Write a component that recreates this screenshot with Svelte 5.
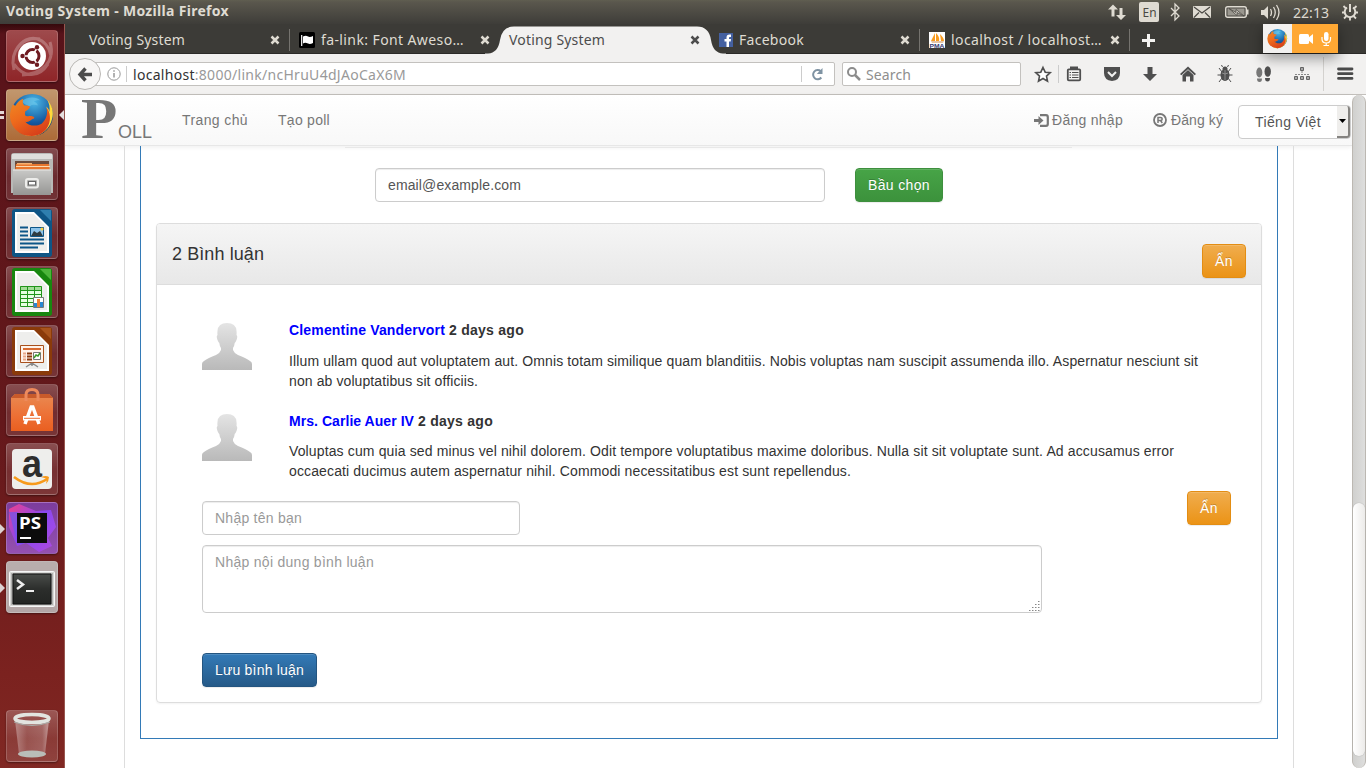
<script>
  // Spreads the letters of a single line so that it takes the given width.
  function fit(node, width) {
    const range = document.createRange();
    range.selectNodeContents(node);
    const natural = range.getBoundingClientRect().width;
    const count = node.textContent.trim().length;
    node.style.letterSpacing = (width - natural) / count + 'px';
  }

  const tabs = [
    { title: 'Voting System', width: 96, icon: '' },
    { title: 'fa-link: Font Aweso…', width: 143, icon: 'flag' },
    { title: 'Voting System', width: 96, icon: '', active: true },
    { title: 'Facebook', width: 65, icon: 'fb' },
    { title: 'localhost / localhost…', width: 151, icon: 'pma' }
  ];

  const comments = [
    {
      name: 'Clementine Vandervort', nameWidth: 156, when: '2 days ago', whenWidth: 75,
      lines: [
        ['Illum ullam quod aut voluptatem aut. Omnis totam similique quam blanditiis. Nobis voluptas nam suscipit assumenda illo. Aspernatur nesciunt sit', 909],
        ['non ab voluptatibus sit officiis.', 189]
      ]
    },
    {
      name: 'Mrs. Carlie Auer IV', nameWidth: 125, when: '2 days ago', whenWidth: 75,
      lines: [
        ['Voluptas cum quia sed minus vel nihil dolorem. Odit tempore voluptatibus maxime doloribus. Nulla sit sit voluptate sunt. Ad accusamus error', 885],
        ['occaecati ducimus autem aspernatur nihil. Commodi necessitatibus est sunt repellendus.', 562]
      ]
    }
  ];
</script>

{#snippet firefox()}
  <circle cx="24" cy="24" r="22" fill="url(#globe)" />
  <path d="M13 10c5-5 15-6 20-1-3-1-5 0-7 1 2 1 4 2 4 4-3-1-6-1-8 1-4-1-6-2-9-5z" fill="#6fc6ea" opacity=".6" />
  <path d="M40 8c5 6 7 13 5 20-2 10-11 18-21 18-5 0-9-1-12-4 14 4 26-4 28-17 0-4 0-7-1-10 2 2 3 4 3 6 1-5 0-9-2-13z" fill="#ffd83a" />
  <path d="M4 13c1 1 2 1 3 1 1-2 4-6 8-7-1 3-1 5 1 7 2 0 4 0 6 1-1 3-3 4-5 5 0 2-1 4 1 5 3 1 5-1 8 1 1 1 0 2-1 2-2 1-4 4-8 3 4 5 12 5 17 2 5-4 7-11 5-17 4 5 5 13 2 19-3 7-10 11-17 11C11 46 2 37 1 26c0-5 1-9 3-13z" fill="url(#fox)" />
{/snippet}

{#snippet office(edge, fold)}
  <path d="M6 5q0-3 3-3h20l17 16v29q0 3-3 3H9q-3 0-3-3z" fill={edge} />
  <path d="M28 2h15q3 0 3 3v14z" fill={edge} />
  <path d="M34 3h11v11z" fill={fold} />
  <path d="M9 5h19l15 15v26H9z" fill="#fff" />
  <path d="M11 7h16.500l13.500 13.500V44H11z" fill="#eeeeec" />
{/snippet}

{#snippet closeMark()}
  <svg class="x" width="10" height="10" viewBox="0 0 10 10"><path d="M1.500 1.500l7 7M8.500 1.500l-7 7" fill="none" stroke="currentColor" stroke-width="2.500" /></svg>
{/snippet}

<div class="desktop">
  <svg class="defs" width="0" height="0">
    <defs>
      <radialGradient id="globe" cx=".55" cy=".2" r=".8"><stop offset="0" stop-color="#4cb9e8" /><stop offset=".6" stop-color="#14589f" /><stop offset="1" stop-color="#0b2f66" /></radialGradient>
      <linearGradient id="fox" x1="0" y1="0" x2=".6" y2="1"><stop offset="0" stop-color="#f08a24" /><stop offset=".5" stop-color="#ee6a1c" /><stop offset="1" stop-color="#d8401a" /></linearGradient>
      <linearGradient id="person" x1="0" y1="0" x2="0" y2="1"><stop offset="0" stop-color="#e4e4e4" /><stop offset="1" stop-color="#b9b9b9" /></linearGradient>
      <linearGradient id="steel" x1="0" y1="0" x2="0" y2="1"><stop offset="0" stop-color="#c9c9c7" /><stop offset="1" stop-color="#969694" /></linearGradient>
      <linearGradient id="bag" x1="0" y1="0" x2="0" y2="1"><stop offset="0" stop-color="#e98a52" /><stop offset=".6" stop-color="#ed6f34" /><stop offset="1" stop-color="#e95f20" /></linearGradient>
      <linearGradient id="storm" x1="0" y1="0" x2="1" y2="1"><stop offset="0" stop-color="#f0408a" /><stop offset=".45" stop-color="#8a48f0" /><stop offset="1" stop-color="#b04ae0" /></linearGradient>
      <linearGradient id="glass" x1="0" y1="0" x2="1" y2="0"><stop offset="0" stop-color="#fff" stop-opacity=".35" /><stop offset=".35" stop-color="#fff" stop-opacity=".12" /><stop offset=".8" stop-color="#fff" stop-opacity=".18" /><stop offset="1" stop-color="#fff" stop-opacity=".45" /></linearGradient>
      <linearGradient id="screen" x1="0" y1="0" x2="0" y2="1"><stop offset="0" stop-color="#4a4d4a" /><stop offset=".5" stop-color="#2c2e2c" /><stop offset="1" stop-color="#232523" /></linearGradient>
    </defs>
  </svg>

  <header class="panel-bar">
    <b use:fit={223}>Voting System - Mozilla Firefox</b>
    <svg width="265" height="24" viewBox="1101 0 265 24" fill="#dfdbd2">
      <path d="M1113 4.500l5 5h-3.500v7h-3v-7h-3.500z M1121 20l-5-5h3.500V8h3v7h3.500z" />
      <rect x="1139" y="2" width="20" height="20" rx="2" />
      <path d="M1171 8l8 8-4 4V4l4 4-8 8" fill="none" stroke="#dfdbd2" stroke-width="1.300" />
      <rect x="1193" y="6" width="18" height="12" rx="1" />
      <path d="M1194 7l8 6 8-6M1194 17.500l5-5M1210 17.500l-5-5" fill="none" stroke="#4a4843" stroke-width="1.200" />
      <rect x="1225.700" y="6.700" width="20.600" height="10.600" rx="2" fill="#4a4843" stroke="#dfdbd2" stroke-width="1.400" />
      <path d="M1227.500 8.500h17v7h-17z" fill="#9a978f" /><path d="M1247 9.500h1.500v5h-1.500z" />
      <path d="M1229 8.500l7 4v-3l8 6.500-7-3.500v3z" stroke="#4a4843" stroke-width=".8" />
      <path d="M1261 10h3l4-4v13l-4-4h-3z" />
      <path d="M1270.500 9q2 3.500 0 7M1273.500 7q3.500 5.500 0 11M1276.500 5q5 7.500 0 15" fill="none" stroke="#dfdbd2" stroke-width="1.300" />
      <path d="M1350 4v8" stroke="#dfdbd2" stroke-width="2" />
      <path d="M1347 7.500a5.300 5.300 0 1 0 6 0" fill="none" stroke="#dfdbd2" stroke-width="2" />
      <path d="M1346 8.500l-2.500-2.500M1354 8.500l2.500-2.500M1344.500 12.500h-2.500M1355.500 12.500h2.500M1346.500 16l-2.500 2.500M1353.500 16l2.500 2.500M1350 17.500v3" stroke="#dfdbd2" stroke-width="1.800" />
      <text x="1142.500" y="17" fill="#4a4843" font-size="13" textLength="14" lengthAdjust="spacingAndGlyphs">En</text>
      <text x="1293" y="17.500" font-size="15" textLength="36" lengthAdjust="spacingAndGlyphs">22:13</text>
    </svg>
  </header>

  <div class="below">
    <aside class="launcher">
      <div class="tile dash">
        <svg width="52" height="52" viewBox="0 0 52 52">
          <path d="M8 40C3 20 18 6 34 9M44 12c6 20-8 32-28 33M10 20C22 0 42 8 45 26M42 34C32 50 16 46 8 34" fill="none" stroke="#fff" stroke-opacity=".25" stroke-width="3" />
          <circle cx="26" cy="26" r="14" fill="#fff" />
          <circle cx="26.500" cy="26" r="6.500" fill="none" stroke="#6e1a20" stroke-width="3" />
          <path d="M26 26L17 26M26 26L31.500 17.500M26 26L31.500 34.500" stroke="#fff" stroke-width="1.500" />
          <circle cx="26.500" cy="26" r="4.500" fill="#fff" />
          <circle cx="16.500" cy="26" r="2.200" fill="#6e1a20" /><circle cx="31" cy="17.300" r="2.200" fill="#6e1a20" /><circle cx="31" cy="34.700" r="2.200" fill="#6e1a20" />
        </svg>
      </div>
      <div class="tile fox">
        <svg width="46" height="46" viewBox="0 0 48 48">{@render firefox()}</svg>
        <i class="pip double"></i><i class="focus"></i>
      </div>
      <div class="tile">
        <svg width="52" height="52" viewBox="0 0 52 52">
          <path d="M5 8q0-3 3-3h36q3 0 3 3v37H5z" fill="#b9b9b7" /><path d="M6 6h40v5H6z" fill="#dededc" />
          <path d="M9 13h34v9H9z" fill="#6b4a3a" /><path d="M10 16h33l1 8H9z" fill="#e8762c" /><path d="M10 18h34v1H10z" fill="#fbd9b0" /><path d="M11 15h15v1.500H11z" fill="#f5b070" />
          <path d="M7 21.500h38v25.500H7z" fill="url(#steel)" /><path d="M7 21.500h38v1H7z" fill="#e8e8e6" />
          <rect x="20" y="31" width="12" height="8.500" rx="2" fill="none" stroke="#ededeb" stroke-width="2" /><rect x="22.500" y="33.500" width="7" height="3.500" fill="#fff" stroke="#666" stroke-width="1" />
        </svg>
      </div>
      <div class="tile">
        <svg width="52" height="52" viewBox="0 0 52 52">
          {@render office('#0e5585', '#2f7fae')}
          <path d="M14 20.500h8M14 24.500h8M14 28.500h8M14 32.500h24M14 36.500h24M14 40.500h18" stroke="#0d5688" stroke-width="2" />
          <path d="M24.500 20.500h13v9h-13z" fill="#8dc4ea" stroke="#0d5688" /><path d="M25 29l3-5 3 2 3-2 3 5z" fill="#2d3c42" /><circle cx="36" cy="22" r="1.500" fill="#ffd040" />
        </svg>
      </div>
      <div class="tile">
        <svg width="52" height="52" viewBox="0 0 52 52">
          {@render office('#18870f', '#4cb53a')}
          <path d="M14 20h22v20H14z" fill="#e6ffe0" /><path d="M14 20h22v4H14z" fill="#a4dc98" />
          <path d="M14.500 20.500h21v20h-21zM14.500 24.500h21M14.500 28.500h21M14.500 32.500h21M14.500 36.500h21M21.500 20v20M28.500 20v20" fill="none" stroke="#22951a" />
          <path d="M27.500 31.500h10v10h-10z" fill="#fff" stroke="#777" /><path d="M28 37h3v4h-3z" fill="#2a87d0" /><path d="M31 33h3v8h-3z" fill="#f08030" /><path d="M34 36h3v5h-3z" fill="#2a87d0" />
        </svg>
      </div>
      <div class="tile">
        <svg width="52" height="52" viewBox="0 0 52 52">
          {@render office('#8a3a0a', '#a8541c')}
          <path d="M14.500 20.500h23v17h-23z" fill="#fff3ea" stroke="#a8501c" /><path d="M17 24h18" stroke="#d86a30" stroke-width="2" />
          <path d="M17 28.500h3M17 31.500h3M17 34.500h3" stroke="#e8a888" stroke-width="2" /><path d="M21 28.500h5M21 31.500h5M21 34.500h5" stroke="#8a3a10" stroke-width="2" />
          <path d="M27.500 27.500h7v7h-7z" fill="#fff" stroke="#777" /><path d="M28 33l2-3 2 1 2-3" fill="none" stroke="#3a9a2a" stroke-width="1.500" />
          <path d="M26 38l-6 4M26 38l6 4M26 38v3" stroke="#888" stroke-width="1.500" />
        </svg>
      </div>
      <div class="tile">
        <svg width="52" height="52" viewBox="0 0 52 52">
          <path d="M5 14l4-4h34l4 4v33H5z" fill="url(#bag)" /><path d="M5 14l4-4h34l4 4z" fill="#c95a2a" />
          <path d="M20 17V11q0-5.500 6-5.500t6 5.500v6" fill="none" stroke="#ee8a5c" stroke-width="3" />
          <path d="M19 40L25.200 23h1.600L33 40" fill="none" stroke="#fff" stroke-width="3.500" />
          <path d="M17 32h18v4.500H17z" fill="#fff" /><path d="M18 33.800h16v1H18z" fill="#ed6f34" />
        </svg>
      </div>
      <div class="tile">
        <svg width="52" height="52" viewBox="0 0 52 52">
          <rect x="6" y="6" width="40" height="40" rx="4" fill="#eeeeec" />
          <text class="sans" x="16" y="34" font-size="39" font-weight="bold" fill="#2d2d2d" textLength="20" lengthAdjust="spacingAndGlyphs">a</text>
          <path d="M8 34q17 13 33 2" fill="none" stroke="#f79a1c" stroke-width="2.600" /><path d="M35 34q5-2 8 0 0 4-3 7 1-4 0-5.500z" fill="#f79a1c" />
        </svg>
      </div>
      <div class="tile storm">
        <svg width="52" height="52" viewBox="0 0 52 52">
          <path d="M3 7l10-5 17 7 15-1 5 17-8 11 4 8-13 6-13-9-9 3L3 25z" fill="url(#storm)" />
          <path d="M3 10l6 22 3 9 5 1L12 10z" fill="#6b55f0" opacity=".7" />
          <path d="M11 11h30v30H11z" fill="#0c0c0c" /><path d="M14 35h11v2H14z" fill="#fff" />
          <text x="13" y="27" font-size="16.500" font-weight="bold" fill="#fff" textLength="22" lengthAdjust="spacingAndGlyphs">PS</text>
        </svg>
        <i class="pip"></i>
      </div>
      <div class="tile term">
        <svg width="52" height="52" viewBox="0 0 52 52">
          <rect x="3.500" y="10.500" width="45" height="35" rx="1" fill="#d8d8d6" stroke="#f6f6f6" /><rect x="5" y="12" width="42" height="32" fill="#b0b0ae" />
          <path d="M7 13h38v30H7z" fill="url(#screen)" stroke="#111" stroke-width="1" />
          <path d="M11 19l6 4.500-6 4.500" fill="none" stroke="#eee" stroke-width="2.500" /><path d="M20 30h8" stroke="#eee" stroke-width="2" />
        </svg>
        <i class="pip"></i>
      </div>
      <div class="tile trash">
        <svg width="52" height="52" viewBox="0 0 52 52">
          <path d="M9 10l4 34q13 6 26 0l4-34z" fill="url(#glass)" />
          <ellipse cx="26" cy="44" rx="14" ry="3.500" fill="#b9bdb8" />
          <ellipse cx="26" cy="8.500" rx="17" ry="4" fill="none" stroke="#e2e4e0" stroke-width="3.500" />
          <path d="M8 12q18 7 36 0" fill="none" stroke="#a9aca8" stroke-width="1" />
        </svg>
      </div>
    </aside>

    <main class="browser">
      <div class="tabs">
        {#each tabs as tab, i}
          <div class="tab" class:active={tab.active} class:line={i === 0 || i > 2}>
            {#if tab.active}
              <svg class="shape" width="241" height="30" viewBox="0 0 241 30"><path d="M0 30V29.500H3Q13 29 15 16 17 2.500 29 2.500H212Q224 2.500 226 16 228 29 238 29.500H241V30z" fill="#f2f1f0" /></svg>
            {/if}
            {#if tab.icon === 'flag'}
              <svg width="16" height="16" viewBox="0 0 16 16"><rect width="16" height="16" rx="1.500" fill="#000" /><path d="M2.700 3v11" stroke="#fff" stroke-width="1.200" /><path d="M4 4.500q3-1.500 5 0 2 1 5-.5v7q-3 1.500-5 .5-3-1.500-5 0z" fill="#fff" /></svg>
            {:else if tab.icon === 'fb'}
              <svg width="14" height="14" viewBox="0 0 14 14"><rect width="14" height="14" fill="#4460a0" /><path d="M7.500 14V8.500H5.500V6h2V4.500q0-3 3-3H12V4h-1.200q-.8 0-.8.8V6h2l-.3 2.500H10V14z" fill="#fff" /></svg>
            {:else if tab.icon === 'pma'}
              <svg class="pma" width="16" height="16" viewBox="0 0 16 16"><rect width="16" height="16" fill="#fff" /><path d="M6 1v8H2zM7 1q4 4 3 8H7zM11 2q4 4 4 7h-3z" fill="#f89c20" /><path d="M2 9.500h13l-1 1H3z" fill="#c88a50" /><text class="sans" x=".5" y="15.500" font-size="6" font-weight="bold" fill="#343a70" textLength="15" lengthAdjust="spacingAndGlyphs">PMA</text></svg>
            {/if}
            <span use:fit={tab.width}>{tab.title}</span>
            {@render closeMark()}
          </div>
        {/each}
        <svg class="plus" width="13" height="13" viewBox="0 0 13 13"><path d="M6.500 0v13M0 6.500h13" stroke="#f4f3f1" stroke-width="3" /></svg>
      </div>

      <div class="toolbar">
        <div class="back"><svg width="14" height="15" viewBox="0 0 14 15"><path d="M7.500 1.500L2 7.500l5.500 6M2.500 7.500H14" fill="none" stroke="#4c4c4c" stroke-width="3.400" /></svg></div>
        <div class="url">
          <svg width="14" height="14" viewBox="0 0 14 14"><circle cx="7" cy="7" r="6.200" fill="none" stroke="#999" /><path d="M7 6v4.500M7 3.300v1.500" stroke="#888" stroke-width="1.300" /></svg>
          <div class="address"><span use:fit={273}><em>localhost</em>:8000/link/ncHruU4dJAoCaX6M</span></div>
          <svg class="reload" width="13" height="13" viewBox="0 0 13 13"><path d="M9.800 3.200A4.600 4.600 0 1 0 10.300 9.500" fill="none" stroke="#7f93a3" stroke-width="2" /><path d="M11.500 0v6H5.800z" fill="#7f93a3" /></svg>
        </div>
        <div class="search">
          <svg width="14" height="14" viewBox="0 0 14 14"><circle cx="5" cy="5" r="4" fill="none" stroke="#8c8c8c" stroke-width="2" /><path d="M8 8l5 5" stroke="#8c8c8c" stroke-width="2.500" /></svg>
          <span use:fit={45}>Search</span>
        </div>
        <svg class="tools" width="331" height="40" viewBox="1021 54 331 40" fill="#4f4f4f">
          <path d="M1043 67.500l2.200 4.700 5 .5-3.700 3.400 1 5-4.500-2.600-4.500 2.600 1-5-3.700-3.400 5-.5z" fill="#fff" stroke="#4f4f4f" stroke-width="1.600" />
          <path d="M1058.500 65v18" stroke="#ccc" />
          <rect x="1067.800" y="69.300" width="12.400" height="11" rx="1" fill="#f2f1f0" stroke="#4f4f4f" stroke-width="1.800" /><path d="M1070 66.500h8v3h-8z" /><path d="M1072 72.500h6.500M1072 75h6.500M1072 77.500h6.500M1069.500 72.500h1.500M1069.500 75h1.500M1069.500 77.500h1.500" stroke="#4f4f4f" stroke-width="1.100" />
          <path d="M1104 67h16v6q0 7-8 8-8-1-8-8z" /><path d="M1108 72l4 4 4-4" fill="none" stroke="#f2f1f0" stroke-width="2" />
          <path d="M1147.500 67h5v7h4.500l-7 7-7-7h4.500z" />
          <path d="M1188 66.500l8 7.500-1.300 1.300-6.700-6-6.700 6L1180 74z M1182.500 75l5.500-5 5.500 5v6.500h-3.500v-5h-4v5h-3.500z" />
          <ellipse cx="1225" cy="75" rx="4.500" ry="6" /><circle cx="1225" cy="69" r="2.500" /><path d="M1219 68l3 4M1231 68l-3 4M1217.500 75h15M1219 82l3-4M1231 82l-3-4M1222.500 67l-1-2M1227.500 67l1-2" fill="none" stroke="#4f4f4f" /><path d="M1225 70v10M1222 73l3 1 3-1" fill="none" stroke="#999" stroke-width=".8" />
          <g fill="#777"><ellipse cx="1259.300" cy="72.500" rx="3" ry="5" /><path d="M1257 78.500h5q0 3.500-2.500 3.500t-2.500-3.500z" /></g><ellipse cx="1267.700" cy="71.500" rx="3.200" ry="5.300" /><path d="M1265 78h5q0 3.500-2.500 3.500t-2.500-3.500z" />
          <path d="M1300.500 67.500h3v3h-3zM1294.500 76.500h3v3h-3zM1300.500 76.500h3v3h-3zM1306.500 76.500h3v3h-3z" fill="#aaa" stroke="#666" /><path d="M1302 71v3M1295 74.500h14" stroke="#888" stroke-dasharray="2 1" />
          <path d="M1323.500 57v34" stroke="#d4d2cf" />
          <path d="M1338.500 69h13.500M1338.500 73.700h13.500M1338.500 78.400h13.500" stroke="#4a4a4a" stroke-width="2.800" stroke-linecap="round" />
        </svg>
      </div>

      <div class="view">
        <div class="page">
          <nav>
            <div class="brand"><b>P</b><span>OLL</span></div>
            <a href="#home" use:fit={66}>Trang chủ</a>
            <a class="second" href="#new" use:fit={52}>Tạo poll</a>
            <div class="account">
              <svg width="15" height="13" viewBox="0 0 15 13"><path d="M6 1.200h6q1.800 0 1.800 1.800v7q0 1.800-1.800 1.800H6" fill="none" stroke="#777" stroke-width="2.200" /><path d="M0 5h4.500V2l5 4.500-5 4.500V8H0z" fill="#777" /></svg>
              <a href="#login" use:fit={71}>Đăng nhập</a>
              <svg class="reg" width="14" height="14" viewBox="0 0 14 14"><circle cx="7" cy="7" r="6" fill="none" stroke="#777" stroke-width="1.800" /><path d="M5 10V4.500h2.500q1.700 0 1.700 1.500T7.500 7.500H5M7.500 7.500L9.300 10" fill="none" stroke="#777" stroke-width="1.500" /></svg>
              <a href="#register" use:fit={52}>Đăng ký</a>
              <div class="lang"><span use:fit={66}>Tiếng Việt</span><i><svg width="7" height="4" viewBox="0 0 7 4"><path d="M0 0h7L3.500 4z" /></svg></i></div>
            </div>
          </nav>

          <div class="container">
            <div class="frame">
              <div class="rule"></div>
              <div class="vote">
                <div class="input"><span use:fit={133}>email@example.com</span></div>
                <button class="green"><span use:fit={62}>Bầu chọn</span></button>
              </div>
              <section>
                <div class="heading">
                  <h4 use:fit={92}>2 Bình luận</h4>
                  <button class="amber"><span use:fit={18}>Ẩn</span></button>
                </div>
                <div class="body">
                  {#each comments as c}
                    <article>
                      <svg width="50" height="48" viewBox="0 0 50 48"><path d="M25 1q9 0 9.500 8 .3 2 0 4 1.500 1 0 5-1 2.500-1.800 3-.3 3-1.700 5v2q1 3 5 5 8 3 12 6 2 1 2 3v6H0v-6q0-2 2-3 4-3 12-6 4-2 5-5v-2q-1.400-2-1.700-5-.8-.5-1.800-3-1.500-4 0-5-.3-2 0-4Q16 1 25 1z" fill="url(#person)" /></svg>
                      <div>
                        <h5><a href="#user" use:fit={c.nameWidth}>{c.name}</a><span use:fit={c.whenWidth}>{c.when}</span></h5>
                        {#each c.lines as [text, width]}
                          <p><span use:fit={width}>{text}</span></p>
                        {/each}
                      </div>
                    </article>
                  {/each}
                  <div class="who">
                    <div class="input hint"><span use:fit={87}>Nhập tên bạn</span></div>
                    <button class="amber"><span use:fit={18}>Ẩn</span></button>
                  </div>
                  <div class="area hint">
                    <span use:fit={159}>Nhập nội dung bình luận</span>
                    <svg width="11" height="11" viewBox="0 0 11 11"><path d="M9 1.500h2M6 4.500h5M3 7.500h8M0 10.500h11" stroke="#888" stroke-dasharray="1.500 1.500" /></svg>
                  </div>
                  <button class="blue"><span use:fit={89}>Lưu bình luận</span></button>
                </div>
              </section>
            </div>
          </div>
        </div>
        <div class="scroll"><div class="thumb"></div></div>
      </div>
    </main>
  </div>

  <div class="sharing">
    <div class="app"><svg width="21" height="21" viewBox="0 0 48 48">{@render firefox()}</svg></div>
    <svg width="46" height="29" viewBox="0 0 46 29" fill="#fff"><rect x="7" y="10" width="10" height="10" rx="1.500" /><path d="M16 14l5-4v10l-5-4z" /><rect x="32" y="8" width="4.500" height="9" rx="2.200" /><path d="M30 13v2q0 4 4.200 4t4.300-4v-2M34.200 19v3M31.500 21.500h5.500" fill="none" stroke="#fff" stroke-width="1.200" /></svg>
  </div>
</div>

<style>
  :global(body) { margin: 0; overflow: hidden; background: #fff; }
  .desktop { position: relative; width: 1366px; height: 768px; overflow: hidden; display: flex; flex-direction: column; font-family: 'Noto Sans', sans-serif; font-size: 14px; }
  .desktop * { box-sizing: border-box; }
  svg { display: block; flex: none; overflow: visible; }
  .defs { position: absolute; }
  .sans { font-family: 'Liberation Sans', Arial, sans-serif; }
  span, b, a, h4 { white-space: nowrap; }
  .panel-bar { height: 24px; flex: none; display: flex; justify-content: space-between; align-items: center; padding-left: 6px; background: linear-gradient(#605e50 0, #5a574d 2px, #3e3d39); color: #dfdbd2; }
  .panel-bar b { font-size: 14px; font-weight: 700; line-height: 22px; margin-bottom: 2px; }
  .below { flex: 1; min-height: 0; display: flex; }

  .launcher { width: 65px; flex: none; display: flex; flex-direction: column; gap: 7px; padding: 6px 0 6px 6px; border-right: 1px solid #98564f; background: linear-gradient(#35090c 0, #58131a 10px, #5c151a 120px, #64181b 400px, #7b221f 650px, #802823); }
  .tile { position: relative; width: 52px; height: 52px; flex: none; display: flex; align-items: center; justify-content: center; border-radius: 4px; border: 1px solid #ffffff2e; background: linear-gradient(#ffffff3c, #ffffff18 55%, #ffffff20); box-shadow: 0 1px 2px #0006; }
  .tile > svg { margin: -1px; }
  .dash { background: linear-gradient(#9e4a4c, #8f2528); }
  .fox { background: linear-gradient(#c1976e, #ad6b38); }
  .storm { background: linear-gradient(#7c3c9c, #9450b0); }
  .term { background: linear-gradient(#b9aead, #b3a6a6); }
  .trash { margin-top: auto; }
  .pip { position: absolute; left: -7px; top: 21px; border: 5px solid transparent; border-left-color: #dcd2d2; border-right: 0; }
  .double { border: 0; width: 4px; height: 8px; border-top: 3px solid #e4d8d8; border-bottom: 3px solid #e4d8d8; }
  .focus { position: absolute; right: -7px; top: 20px; border: 5px solid transparent; border-right-color: #e4dede; border-left: 0; }

  .browser { flex: 1; min-width: 0; display: flex; flex-direction: column; }
  .tabs { height: 30px; flex: none; display: flex; align-items: center; padding-left: 15px; background: linear-gradient(#2b2a28, #2b2a28) 0 29px / 100% 1px no-repeat #3c3b37; color: #dfdbd2; }
  .tab { position: relative; width: 210px; height: 100%; display: flex; align-items: center; gap: 6px; padding: 2px 10px 0 9px; }
  .tab span { font-size: 14px; margin-top: -2px; }
  .tab > * { position: relative; }
  .tab .x { margin-left: auto; color: #dfdbd2; }
  .tab.line::after { content: ''; position: absolute; right: 0; top: 5px; width: 1px; height: 22px; background: #75736e; }
  .tab .shape { position: absolute; left: -15px; top: 0; }
  .tab.active, .tab.active .x { color: #4c4c4c; }
  .plus { margin: 2px 0 0 12px; }

  .toolbar { height: 41px; flex: none; display: flex; align-items: center; background: #f2f1f0; border-bottom: 1px solid #c3c0bc; }
  .back { position: relative; z-index: 1; width: 32px; height: 32px; margin-left: 4px; border: 1px solid #b9b7b4; border-radius: 50%; background: #f7f6f5; display: flex; align-items: center; justify-content: center; }
  .url { width: 751px; height: 24px; margin-left: -17px; border: 1px solid #c3c1be; border-radius: 2px; background: linear-gradient(#ccc, #ccc) 716px 3px / 1px 16px no-repeat #fff; display: flex; align-items: center; padding-left: 22px; color: #999; }
  .address { margin-left: 5px; padding-left: 6px; border-left: 1px solid #ccc; height: 16px; line-height: 18px; }
  .address em { font-style: normal; color: #333; }
  .reload { margin-left: auto; margin-right: 10px; }
  .search { width: 179px; height: 24px; margin-left: 7px; border: 1px solid #c3c1be; border-radius: 2px; background: #fff; display: flex; align-items: center; gap: 5px; padding-left: 4px; color: #8e8e8e; }

  .view { flex: 1; min-height: 0; display: flex; }
  .page { width: 1287px; display: flex; flex-direction: column; font-family: 'Liberation Sans', Arial, sans-serif; font-size: 14px; line-height: 20px; color: #333; background: #fff; }
  .page a { text-decoration: none; }
  nav { height: 51px; flex: none; display: flex; align-items: center; padding-left: 16px; border-bottom: 1px solid #e7e7e7; background: linear-gradient(#fff, #f8f8f8); box-shadow: 0 1px 5px #00000013; }
  nav a { color: #777; }
  .brand { width: 101px; display: flex; align-items: baseline; padding-top: 11px; color: #777; line-height: 50px; }
  .brand b { font: bold 56px/50px 'Liberation Serif', serif; width: 37px; transform: scaleX(1.06); transform-origin: left; }
  .brand span { font-size: 18px; }
  nav .second { margin-left: 30px; }
  .account { margin-left: auto; display: flex; align-items: center; }
  .account svg { margin-right: 3px; }
  .account .reg { margin-left: 30px; margin-right: 4px; }
  .lang { width: 113px; height: 34px; margin: 4px 1px 0 15px; border: 1px solid #ccc; border-radius: 4px; background: #fff; display: flex; justify-content: space-between; align-items: center; padding-left: 16px; color: #555; }
  .lang i { width: 13px; height: 32px; display: flex; align-items: center; justify-content: center; background: #efeeec; border-right: 2px solid #858380; border-bottom: 2px solid #858380; border-radius: 0 3px 3px 0; }
  .lang i svg { margin: 0; }

  .container { flex: 1; width: 1170px; margin-left: 59px; border: solid #ddd; border-width: 0 1px; padding: 0 15px; }
  .frame { height: 593px; border: 1px solid #337ab7; border-top: 0; padding: 1px 15px 0; }
  .rule { height: 1px; width: 727px; margin-left: 189px; background: #e8e8e8; }
  .vote { display: flex; gap: 30px; margin: 20px 0 21px 219px; }
  .input { width: 450px; height: 34px; border: 1px solid #ccc; border-radius: 4px; padding: 6px 12px; box-shadow: inset 0 1px 1px #00000013; color: #555; }
  .hint { color: #999; }
  button { height: 34px; padding: 0 12px; border: 1px solid; border-radius: 4px; font: inherit; color: #fff; text-shadow: 0 -1px 0 #0003; box-shadow: inset 0 1px 0 #ffffff26, 0 1px 1px #00000013; }
  .green { background: linear-gradient(#47a447, #3c923c); border-color: #3e8f3e; }
  .amber { background: linear-gradient(#f0ad4e, #eb9316); border-color: #e38d13; }
  .blue { background: linear-gradient(#337ab7, #265a88); border-color: #245580; }
  section { height: 480px; border: 1px solid #ddd; border-radius: 4px; box-shadow: 0 1px 2px #0000000d; overflow: hidden; }
  .heading { height: 61px; display: flex; justify-content: space-between; padding: 20px 15px 0; border-bottom: 1px solid #ddd; background: linear-gradient(#f5f5f5, #e8e8e8); }
  h4 { margin: 0; font-size: 18px; font-weight: 500; line-height: 20px; }
  .body { padding: 35px 30px 0 45px; }
  article { display: flex; gap: 37px; height: 91px; }
  article > svg { margin-top: 2px; }
  h5 { margin: 0 0 11px; font-size: 14px; line-height: 20px; display: flex; gap: 4px; }
  h5 a { color: #00f; }
  p { margin: 0; height: 20px; }
  article:nth-child(2) { height: 90px; }
  article:nth-child(2) h5 { margin-bottom: 10px; }
  .who { display: flex; justify-content: space-between; align-items: flex-start; }
  .who .input { width: 318px; }
  .who button { margin-top: -10px; }
  .area { position: relative; width: 840px; height: 68px; margin: 10px 0 40px; border: 1px solid #ccc; border-radius: 4px; padding: 6px 12px; box-shadow: inset 0 1px 1px #00000013; }
  .area svg { position: absolute; right: 1px; bottom: 1px; }

  .scroll { width: 14px; border: solid #bcb8b2; border-width: 0 1px; border-radius: 7px; background: linear-gradient(90deg, #d0d0ce, #dededd); padding-top: 408px; }
  .thumb { height: 253px; border-radius: 6px; background: linear-gradient(90deg, #fff, #ecebe9); box-shadow: 0 0 1px #888; }

  .sharing { position: absolute; left: 1263px; top: 24px; width: 75px; height: 29px; display: flex; background: #ffa834; box-shadow: 0 5px 14px #0006; }
  .app { width: 29px; display: flex; align-items: center; justify-content: center; background: #f2f1f0; }
</style>
